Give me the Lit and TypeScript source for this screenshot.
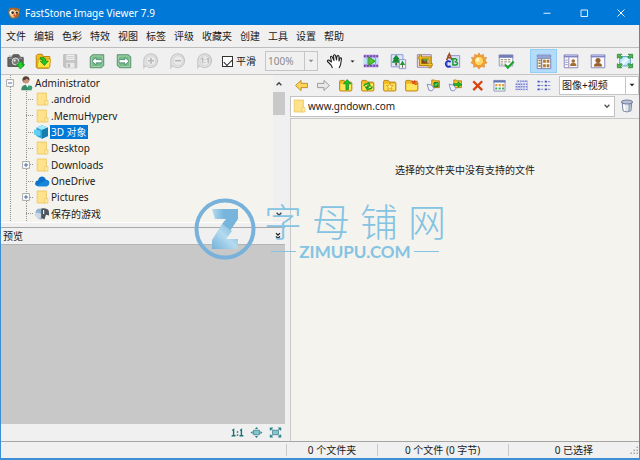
import { LitElement, html, svg, css, nothing, type TemplateResult } from "lit";
import { customElement, property } from "lit/decorators.js";
import { classMap } from "lit/directives/class-map.js";

const folderBase = svg`
  <path d="M3 5.500Q3 4 4.500 4H8.500L10 6H16Q17.500 6 17.500 7.500V15Q17.500 16.500 16 16.500H4.500Q3 16.500 3 15Z" fill="#f3b81e" stroke="#b57a10"/>
  <path d="M4 8H16.500V14Q16.500 15.500 15.500 15.500H5Q4 15.500 4 14.500Z" fill="#ffe45e"/>`;

const linkBase = svg`
  <path d="M8 3.500H11L12 4.500H17V12.500H8Z" fill="#f3c02c" stroke="#b57a10"/>
  <path d="M9 6.500H16V11.500H9Z" fill="#ffe45e"/>
  <path d="M2.500 8.500L8 9.500L10.500 13.500L8 16.500L4.500 15.500Z" fill="#eef1ff" stroke="#7783ba"/>`;

const zoomBase = svg`
  <path d="M10 2A7.700 7.700 0 1 1 4 15L2 17.500V9.500A7.700 7.700 0 0 1 10 2Z" fill="#e2e2e2" stroke="#c6c6c6" stroke-width="1.200"/>
  <circle cx="10" cy="9.600" r="5.400" fill="#ebebeb" stroke="#d2d2d2"/>`;

const frameBase = svg`
  <path d="M2.500 3.500H17.500V17.500H2.500Z" fill="#fbf9fb" stroke="#8181b5"/>
  <path d="M2 3H18V6H2Z" fill="#7e83bd"/><path d="M3 4H17" stroke="#b9c0ef"/>`;

const ICONS: Record<string, TemplateResult> = {
  logo: svg`
    <path d="M2 7L3 2L8 3Q12 1 16 4L19 3L18 9Q19 15 13 18H7Q1 14 2 7Z" fill="#a8672a"/>
    <path d="M3 9Q5 4 10 5L14 11L9 17Q4 15 3 9Z" fill="#f0cb8e"/>
    <circle cx="7" cy="9" r="3" fill="#fff"/><circle cx="8" cy="9.500" r="1.900" fill="#3a2c22"/>
    <circle cx="14" cy="9" r="2.600" fill="#ffe7b0"/><circle cx="14" cy="9.500" r="1.700" fill="#3a2c22"/>
    <path d="M10 10L12 14L9 15Z" fill="#e03c28"/>`,
  camera: svg`
    <path d="M1 6H5L7 3H13L15 6H18V16H1Z" fill="#676767" stroke="#4d4d4d"/>
    <path d="M2 7H17M2 4.500H5" stroke="#a5a5a5"/><circle cx="9.500" cy="10.500" r="5" fill="#d4d4d4" stroke="#414141"/>
    <circle cx="9.500" cy="10.500" r="3" fill="#7a7a7a"/><circle cx="8.500" cy="9.500" r="1.200" fill="#eee"/>
    <path d="M13 11H17V14H19.500L15 19L10.500 14H13Z" fill="#23d12d" stroke="#0b8d19" stroke-width=".8"/>`,
  open: svg`
    <path d="M2.500 17V4L4 2.500H9L10.500 5H17.500V16.500L16 18H3.500Z" fill="#f9bd15" stroke="#b67c0b"/>
    <path d="M5 8H18.500L17 17.500H3.500Z" fill="#ffe63c" stroke="#d39c18"/>
    <path d="M7 6Q13 5 13 10H16L11.500 15L7 10H10Q10 8 7 8Z" fill="#23c52b" stroke="#0e8718" stroke-width=".8"/>`,
  save: svg`
    <path d="M3 3H17.500V17.500H4.500L3 16Z" fill="#c4c4c4" stroke="#bababa"/><path d="M6 3H15V9H6Z" fill="#eee"/>
    <path d="M7 5H14M7 7H14" stroke="#ccc"/><path d="M6 12H15V17.500H6Z" fill="#e9e9e9"/><path d="M7.500 13H10V17H7.500Z" fill="#b8b8b8"/>`,
  prev: svg`
    <path d="M2.500 5.500L5 3H17.500V15L15 17.500H2.500Z" fill="#72b58a" stroke="#5b8e6c"/>
    <path d="M4 6L6 4.500H16V14L14 16H4Z" fill="#75bb82" stroke="#a5d6ae"/>
    <path d="M4.500 10.200L9 6V8.500H15.500V12H9V14.500Z" fill="#fff" stroke="#3e7f75" stroke-width=".8"/>`,
  next: svg`
    <path d="M2.500 3H15L17.500 5.500V17.500H5L2.500 15Z" fill="#72b58a" stroke="#5b8e6c"/>
    <path d="M4 4.500H14L16 6V16H6L4 14Z" fill="#75bb82" stroke="#a5d6ae"/>
    <path d="M15.500 10.200L11 6V8.500H4.500V12H11V14.500Z" fill="#fff" stroke="#3e7f75" stroke-width=".8"/>`,
  zoomIn: svg`${zoomBase}<path d="M10 6.500V13M6.700 9.700H13.300" stroke="#b8b8b8" stroke-width="1.800"/>`,
  zoomOut: svg`${zoomBase}<path d="M6.700 9.700H13.300" stroke="#b8b8b8" stroke-width="1.800"/>`,
  actual: svg`${zoomBase}<path d="M6 8L7.500 7V12.500M12 8L13.500 7V12.500M10 8V9M10 11V12" fill="none" stroke="#b4b4b4" stroke-width="1.300"/>`,
  hand: svg`
    <path d="M6.500 17L5 14L1.500 10.500Q1 9 2.700 9L5.500 11L4.500 6Q5 4.500 6.300 6L8 9.500L7.500 4.500Q8.500 3 9.500 4.500L10.500 9L11 5Q12.500 4 13 5.500V10L14 7Q15.500 6.500 15.500 8L14.500 14L13 17" fill="#fff" stroke="#222" stroke-width="1.100" stroke-linejoin="round"/>`,
  film: svg`
    <path d="M2 3H18V17H2Z" fill="#b18be2"/><path d="M2 4.500H18M2 15.500H18" stroke="#6a48a3" stroke-width="2" stroke-dasharray="2 1.500"/>
    <path d="M2 6.500H18V13.500H2Z" fill="#b9e4f7"/><path d="M6 6.500V13.500M15 6.500V13.500" stroke="#a08bd0"/>
    <path d="M7.500 5.500L14.500 10.200L7.500 15Z" fill="#57c826" stroke="#2c8b15"/>`,
  tree: svg`
    <path d="M2.500 3H15.500V16.500H2.500Z" fill="#dce7ff" stroke="#8790ca"/>
    <path d="M8 3L12 8H10.500L13 12H3L5.500 8H4Z" fill="#1b8b33"/><path d="M7 12H9V15H7Z" fill="#6b5921"/>
    <path d="M11.500 8.500H18.500V18.500H11.500Z" fill="#edf2ff" stroke="#8790ca"/><path d="M15 9.500L18 14.500H12Z" fill="#239a35"/><path d="M15 14V17.500" stroke="#6b5921"/>`,
  crop: svg`
    <path d="M1.500 3H17V17H1.500Z" fill="#e9d9dc" stroke="#8d80ad"/><path d="M4 7H13V14H4Z" fill="#45aa3b"/><path d="M4 11L7 8L10 11L12 9V14H4Z" fill="#8a451e"/>
    <path d="M5 3V14H18.500M2.500 6.500H15.500V18" fill="none" stroke="#a47404" stroke-width="3"/><path d="M5 3.500V14H18M3 6.500H15.500V17.500" fill="none" stroke="#f1c329" stroke-width="1.500"/>`,
  letters: svg`
    <path d="M5 4H18.500V17H5Z" fill="#dcdff8" stroke="#8c91c7"/>
    <path d="M4 9L7 2L10 9M5 6.500H9" fill="none" stroke="#9d4d28" stroke-width="1.700"/>
    <path d="M8.500 11Q4 8.500 3 13Q3.500 18 8.500 15.500" fill="none" stroke="#1731c4" stroke-width="2"/>
    <path d="M11 7.500V14.500H14Q16.500 14 16 12Q15.500 11 13 11Q15.500 10.500 15.500 9Q15 7.500 13.500 7.500Z" fill="none" stroke="#149c2a" stroke-width="1.600"/>`,
  sun: svg`
    <path d="M10 1L12 4L15 2.500V6L18.500 6L17 9.500L19 12L16 13.500L16 17L12.500 16L10 19L7.500 16L4 17V13.500L1 12L3 9.500L1.500 6H5V2.500L8 4Z" fill="#f0a03c" stroke="#d9842a" stroke-width=".6"/>
    <circle cx="10" cy="10" r="5.200" fill="#ffd865" stroke="#e98f22"/><circle cx="8.500" cy="8.500" r="2.200" fill="#fff6c0"/>`,
  settings: svg`
    <path d="M2.500 3.500H17.500V15.500H2.500Z" fill="#fff" stroke="#8790b4"/><path d="M2 3H18V6.500H2Z" fill="#727fb6"/>
    <path d="M4 8.500H16M4 11H16M4 13.500H10" stroke="#a6a18d" stroke-width="1.600" stroke-dasharray="3 1"/>
    <path d="M9 14L12 17.500L18.500 10.500" fill="none" stroke="#1ba32c" stroke-width="2.400"/>`,
  viewThumbs: svg`
    <path d="M2.500 7H7V18.500H2.500ZM7.500 7H17.500V18.500H7.500Z" fill="#fff8e6" stroke="#6d77b2"/><path d="M2.500 3.500H17.500V5.500H2.500Z" fill="#c3cbf3" stroke="#6d77b2"/>
    <path d="M3.800 9.500H6.200M3.800 12.500H6.200M3.800 15.500H6.200" stroke="#9a7440" stroke-width="1.600"/>
    <path d="M9 8.500H12V12H9ZM13 8.500H16V12H13ZM9 13.500H12V17H9ZM13 13.500H16V17H13Z" fill="#a87a3c"/>`,
  viewSplit: svg`${frameBase}
    <path d="M7.500 6V17" stroke="#8181b5"/><path d="M3.800 9H6.200M3.800 11.500H6.200M3.800 14H6.200" stroke="#8088b3"/>
    <circle cx="12.500" cy="10" r="2" fill="#a56f34"/><path d="M9 15.500Q9 12 12.500 12T16 15.500Z" fill="#a56f34"/>`,
  viewSingle: svg`${frameBase}
    <circle cx="10" cy="9.500" r="2.800" fill="#95602b"/><path d="M5.500 16Q5.500 12.300 10 12.300T14.500 16Z" fill="#95602b"/>`,
  fullscreen: svg`
    <path d="M4 5H16V15.500H4Z" fill="#b9e7fa" stroke="#5a9fc5"/><path d="M5 12L11 6H15V8L8 15H5Z" fill="#e4f8ff"/>
    <path d="M1.500 7V2.500H6.500L5 4L7 6L5.500 7.500L3.500 5.500ZM13.500 2.500H18.500V7L16.500 5.500L14.500 7.500L13 6L15 4ZM1.500 13L3.500 14.500L5.500 12.500L7 14L5 16L6.500 17.500H1.500ZM18.500 13V17.500H13.500L15 16L13 14L14.500 12.500L16.500 14.500Z" fill="#50b94d" stroke="#207d2b" stroke-width=".8"/>`,
  back: svg`<path d="M3 10L9.500 4V7.500H17V12.500H9.500V16Z" fill="#ffd65a" stroke="#b98117"/>`,
  forward: svg`<path d="M17 10L10.500 4V7.500H3V12.500H10.500V16Z" fill="#e8e8e8" stroke="#8f8f8f"/>`,
  folderUp: svg`${folderBase}<path d="M10.500 15V8H7.500L12 3L16.500 8H13.500V15Z" fill="#1bc329" stroke="#0b8a19" stroke-width=".8"/>`,
  folderSync: svg`${folderBase}<path d="M5.500 10.500Q7 7.500 10.500 8L11.500 7L13 10.500H9.500M15.500 11Q15 14.500 11 14L10 15L8 12H11.500" fill="none" stroke="#169b22" stroke-width="1.600"/>`,
  folderStar: svg`${folderBase}<path d="M10.300 7L11.500 10H14.500L12 12L13 15L10.300 13.200L7.600 15L8.600 12L6 10H9.200Z" fill="#fff48c" stroke="#d88c13" stroke-width=".8"/>`,
  folderNew: svg`${folderBase}<path d="M10 4L12 6L14 4M11 8L13 7L15 9L17.500 7M14 4V9M10 6L17 5" fill="none" stroke="#df4a18" stroke-width="1.200"/>`,
  copyTo: svg`${linkBase}<path d="M10.500 6.500H15.500V11.500H10.500Z" fill="#1ead31" stroke="#0a761b"/><path d="M12 10L14.500 7.500" stroke="#d7ffd6"/>`,
  moveTo: svg`${linkBase}<path d="M8 7.500H13V5.500L17.500 9L13 12V10H8Z" fill="#1db62b" stroke="#0a761b" stroke-width=".7"/>`,
  remove: svg`<path d="M5 5L15.500 15.500M15.500 5L5 15.500" stroke="#d8430f" stroke-width="2.700"/>`,
  thumbs: svg`
    <path d="M3.500 4H16.500V16.500H3.500Z" fill="#fff" stroke="#7f88b0"/><path d="M3 4H17V6.500H3Z" fill="#6475b5"/>
    <path d="M5 9.500H15.500" stroke="#e39a32" stroke-width="2.500" stroke-dasharray="2.500 1.500"/><path d="M5 13.500H15.500" stroke="#3dad5b" stroke-width="2.500" stroke-dasharray="2.500 1.500"/>`,
  details: svg`
    <path d="M5 5H17M3 8.500H17M3 11.500H17M3 14.500H17" stroke="#757fd0" stroke-width="1.600" stroke-dasharray="2.200 .8"/><path d="M5 4V16M9 4V16M13 4V16M17 4V16" stroke="#b1b8e9"/>`,
  list: svg`
    <path d="M3 5.500H5.500M11.500 5.500H14M3 10H5.500M11.500 10H14M3 14.500H5.500M11.500 14.500H14" stroke="#4251c0" stroke-width="2"/>
    <path d="M6.500 5.500H9.500M15 5.500H18M6.500 10H9.500M15 10H18M6.500 14.500H9.500M15 14.500H18" stroke="#6c76c9" stroke-width="1.200" stroke-dasharray="1.300 .5"/>`,
  trash: svg`
    <path d="M4 5L5 16Q10 19 15 16L16 5Z" fill="#e3e8f1" stroke="#626d8d"/><path d="M12 7L11.500 16.500L14 16L15 7Z" fill="#a2abc2"/>
    <ellipse cx="10" cy="5" rx="7" ry="2.500" fill="#b9c1d6" stroke="#596585"/><path d="M6 8L7 16" stroke="#fff" stroke-width="1.500"/>`,
  folder: svg`<path d="M4 2.500H15.500V17.500H4Z" fill="#ffe28a" stroke="#ebc55e"/><path d="M13.500 12H17.500V17.500H13.500Z" fill="#ffe9a5" stroke="#ebc55e" stroke-width=".8"/>`,
  user: svg`
    <path d="M4 19Q4 13 10 12Q16 13 17 19Z" fill="#3c8868"/><path d="M9 11L12 16L13 12Z" fill="#fff"/><circle cx="10" cy="6.500" r="4" fill="#c9937c"/>
    <path d="M5.500 6Q6 1 10.500 1.500Q14.500 2 14.500 7Q12 6 11 4.500Q9 7 6.500 6.500V10Z" fill="#564034"/>
    <circle cx="15" cy="16" r="3" fill="#35a276"/>`,
  cube: svg`
    <path d="M10 1.500L17.500 4.500V15L10 18.500L3 15V4.500Z" fill="#29a5db"/><path d="M10 1.500L17.500 4.500L10 7.500L3 4.500Z" fill="#a6e9fb"/>
    <path d="M10 7.500L17.500 4.500V15L10 18.500Z" fill="#167eae"/><path d="M0 7L8 8V15L0 13.500Z" fill="#5fd0f2"/>`,
  cloud: svg`
    <path d="M5 16.500Q1 16 1.500 12.500Q2 9.500 5 9.500Q6 4.500 10.500 4.500Q14 5 15 8.500Q19 9 19 12.500Q18.500 16 16 16.500Z" fill="#0c72c8"/>
    <path d="M5 16.500Q3 15 8 12.500L12 11Q14 8 18.500 10Q20.500 15 16 16.500Z" fill="#1586dc"/>`,
  games: svg`
    <path d="M2 8Q2 3 8 3L10 5V17Q3 17 2 8Z" fill="#8fb1d0"/><path d="M9 3Q17 2 18.500 6L19 12L15 11L13 17L9 15Z" fill="#4c5660"/>
    <path d="M0 10L5 8L9 10L8 16L3 14Z" fill="#ccd9e5"/><path d="M12 5V10" stroke="#e9eef2" stroke-width="1.500"/>`,
  oneToOne: svg`<path d="M2 7L4 5.500V15M1 15H7M14 7L16 5.500V15M13 15H19M10 8V10.500M10 12.500V15" fill="none" stroke="#1a7474" stroke-width="2.200"/>`,
  shrink: svg`
    <path d="M5.500 6.500H14.500V13.500H5.500Z" fill="#83c5d0" stroke="#286f7d"/><path d="M10 1.500L12.500 4.500H7.500ZM10 18.500L12.500 15.500H7.500ZM1 10L4 7.500V12.500ZM19 10L16 7.500V12.500Z" fill="#25808a"/>`,
  fit: svg`
    <path d="M5.500 6.500H14.500V13.500H5.500Z" fill="#83c5d0" stroke="#286f7d"/><path d="M2 7V3H6M14 3H18V7M2 13V17H6M14 17H18V13M2 3L5 6M18 3L15 6M2 17L5 14M18 17L15 14" fill="none" stroke="#25808a" stroke-width="1.600"/>`,
  caret: svg`<path d="M2 6H18L10 14Z" fill="currentColor"/>`,
  up: svg`<path d="M4 13L10 7L16 13" fill="none" stroke="currentColor" stroke-width="3.500"/>`,
  down: svg`<path d="M4 7L10 13L16 7" fill="none" stroke="currentColor" stroke-width="3.500"/>`,
  collapse: svg`<path d="M5 3L10 8L15 3M5 11L10 16L15 11" fill="none" stroke="currentColor" stroke-width="3"/>`,
  minimize: svg`<path d="M3 10.500H17" stroke="#fff" stroke-width="1.800"/>`,
  maximize: svg`<path d="M4 4H17V17H4Z" fill="none" stroke="#fff" stroke-width="1.800"/>`,
  close: svg`<path d="M3 3L17 17M17 3L3 17" stroke="#fff" stroke-width="1.900"/>`,
  plus: svg`<path d="M1.500 1.500H18.500V18.500H1.500Z" fill="#fff" stroke="#949494" stroke-width="2"/><path d="M5 10H15M10 5V15" stroke="#34589c" stroke-width="2.200"/>`,
  minus: svg`<path d="M1.500 1.500H18.500V18.500H1.500Z" fill="#fff" stroke="#949494" stroke-width="2"/><path d="M5 10H15" stroke="#34589c" stroke-width="2.200"/>`,
  grip: svg`<path d="M15 3H18V6H15ZM15 9H18V12H15ZM15 15H18V18H15ZM9 9H12V12H9ZM9 15H12V18H9ZM3 15H6V18H3Z" fill="#a8a8a8"/>`,
};

@customElement("fs-icon")
class FsIcon extends LitElement {
  @property() name = "";
  static styles = css`
    :host { display: block; flex: none; width: 20px; height: 20px; }
    svg { display: block; width: 100%; height: 100%; }
  `;
  render() {
    return html`<svg viewBox="0 0 20 20" aria-hidden="true">${ICONS[this.name]}</svg>`;
  }
}

type Action = [icon: string, label: string, disabled?: boolean];

const MENUS = ["文件", "编辑", "色彩", "特效", "视图", "标签", "评级", "收藏夹", "创建", "工具", "设置", "帮助"];
const FILE_ACTIONS: Action[] = [
  ["camera", "截图"], ["open", "打开"], ["save", "保存", true], ["prev", "上一个"], ["next", "下一个"],
  ["zoomIn", "放大", true], ["zoomOut", "缩小", true], ["actual", "实际大小", true],
];
const EDIT_ACTIONS: Action[] = [
  ["film", "幻灯片"], ["tree", "调整大小"], ["crop", "裁剪"], ["letters", "重命名"], ["sun", "亮度"], ["settings", "设置"],
];
const VIEW_ACTIONS: Action[] = [
  ["viewThumbs", "缩略图"], ["viewSplit", "窗口视图"], ["viewSingle", "单图视图"], ["fullscreen", "全屏"],
];
const FOLDER_ACTIONS: Action[] = [
  ["back", "后退"], ["forward", "前进"], ["folderUp", "向上"], ["folderSync", "刷新"], ["folderStar", "收藏"],
  ["folderNew", "新建文件夹"], ["copyTo", "复制到"], ["moveTo", "移动到"], ["remove", "删除"],
  ["thumbs", "缩略图"], ["details", "详细信息"], ["list", "列表"],
];
const NODES: { label: string; icon: string; expandable?: boolean; selected?: boolean }[] = [
  { label: ".android", icon: "folder" },
  { label: ".MemuHyperv", icon: "folder" },
  { label: "3D 对象", icon: "cube", selected: true },
  { label: "Desktop", icon: "folder" },
  { label: "Downloads", icon: "folder", expandable: true },
  { label: "OneDrive", icon: "cloud" },
  { label: "Pictures", icon: "folder", expandable: true },
  { label: "保存的游戏", icon: "games" },
];

@customElement("app-root")
class AppRoot extends LitElement {
  static styles = css`
    :host {
      display: block;
      font: 10px/14px "Noto Sans", "Noto Sans CJK SC", sans-serif;
      color: #1a1a1a;
    }
    * { box-sizing: border-box; }
    button, input, select { font: inherit; color: inherit; margin: 0; padding: 0; border: 0; background: none; border-radius: 0; }
    button { display: flex; align-items: center; justify-content: center; }
    select { appearance: none; flex: 1; min-width: 0; padding: 0 2px; opacity: 1; }
    .window {
      position: relative;
      display: flex;
      flex-direction: column;
      min-height: 100vh;
      background: #f0f0f0;
      border: solid #3c8fd2;
      border-width: 0 1px 2px;
    }
    .title { display: flex; align-items: center; height: 25px; padding: 0 1px 0 7px; gap: 4px; margin: 0 -1px; background: #0078d7; color: #fff; }
    .title h1 { flex: 1; margin: 0; font-size: 10px; font-weight: 400; }
    .title fs-icon { width: 14px; height: 14px; }
    .title .group button { width: 37px; height: 25px; }
    .title button fs-icon { width: 10px; height: 10px; }
    .menu { display: flex; align-items: center; height: 23px; gap: 8px; padding-left: 5px; border-bottom: 1px solid #bdbdbd; font-family: "Noto Sans CJK SC", sans-serif; }
    .bar { display: flex; align-items: center; height: 26px; padding: 0 1px; }
    .group { display: flex; align-items: center; }
    .group button { width: 27px; height: 24px; }
    .bar .group fs-icon { width: 18px; height: 18px; }
    .active { background: #b3dcfb; outline: 1px solid #96cdf5; outline-offset: -1px; }
    .smooth { display: flex; align-items: center; gap: 3px; margin: 0 9px 0 4px; }
    .smooth input { appearance: none; display: grid; place-items: center; width: 11px; height: 11px; border: 1px solid #333; background: #fff; }
    .smooth input:checked::before { content: ""; width: 7px; height: 4px; border: solid #222; border-width: 0 0 1px 1px; transform: rotate(-45deg); }
    .combo { display: flex; align-items: center; border: 1px solid #c5c5c5; background: #fff; }
    .combo fs-icon { width: 6px; height: 6px; margin: 0 3px; }
    .split { align-self: stretch; border-left: 1px solid #c5c5c5; }
    .zoom { width: 53px; height: 20px; background: #f0f0f0; color: #8a8a8a; }
    .hand { width: 24px; margin-left: 3px; }
    .pan { display: flex; align-items: center; margin-right: 1px; margin-left: 3px; }
    .pan .drop { width: 8px; }
    .pan .drop fs-icon { width: 5px; height: 5px; }
    .views { margin-left: auto; }
    .body { flex: 1; display: grid; grid-template-columns: 289fr 349fr; border-top: 1px solid #c6c6c6; }
    .left { display: flex; flex-direction: column; min-width: 0; padding-right: 5px; }
    .browser { display: flex; background: #f4f3ee; border-bottom: 1px solid #fff; }
    .tree { flex: 1; height: 147px; margin: 0; padding: 0 0 0 1px; list-style: none; display: grid; grid-auto-rows: 1fr; }
    .tree li { display: flex; align-items: center; min-height: 0; }
    .gutter {
      align-self: stretch; width: 16px; display: grid; place-items: center;
      background: repeating-linear-gradient(#929292 0 1px, transparent 1px 2px) center / 1px 100% no-repeat;
    }
    .branch {
      background:
        repeating-linear-gradient(#929292 0 1px, transparent 1px 2px) center / 1px 100% no-repeat,
        repeating-linear-gradient(90deg, #929292 0 1px, transparent 1px 2px) right center / 8px 1px no-repeat;
    }
    .gutter fs-icon { width: 8px; height: 8px; }
    .tree li > fs-icon { width: 16px; height: 16px; }
    .label { padding: 0 1px; font-size: 10px; }
    .selected { background: #0078d7; color: #fff; }
    .scroll { display: flex; flex-direction: column; align-items: center; width: 12px; background: #f0f0f0; }
    .scroll button { width: 12px; height: 17px; color: #444; }
    .scroll fs-icon { width: 8px; height: 8px; }
    .thumb { width: 12px; height: 23px; background: #c9c9c9; }
    .track { flex: 1; }
    .head { display: flex; align-items: center; justify-content: space-between; height: 17px; margin-top: 4px; padding: 0 3px 0 2px; border-top: 1px solid #a8a8a8; }
    .head h2 { margin: 0; font-size: 10px; font-weight: 400; }
    .head fs-icon { width: 8px; height: 8px; }
    .preview { flex: 1; background: #c8c8c8; border-top: 1px solid #b4b4b4; }
    .tools { display: flex; align-items: center; justify-content: flex-end; gap: 4px; height: 17px; padding-right: 2px; }
    .tools button { width: 15px; height: 15px; }
    .tools fs-icon { width: 13px; height: 13px; }
    .right { display: flex; flex-direction: column; min-width: 0; }
    .foldbar { display: flex; align-items: center; height: 20px; }
    .foldbar .group button { width: 22px; height: 20px; }
    .foldbar .group fs-icon { width: 17px; height: 17px; }
    .filter { flex: 1; height: 19px; margin-left: 5px; }
    .address { display: flex; align-items: center; height: 22px; }
    .path { flex: 1; display: flex; align-items: center; min-width: 0; height: 21px; border: 1px solid #c2c2c2; background: #fff; }
    .path fs-icon { width: 16px; height: 16px; }
    .path input { flex: 1; min-width: 0; padding: 0 1px; outline: none; }
    .path button { width: 14px; color: #555; }
    .path button fs-icon { width: 8px; height: 8px; }
    .trash { width: 24px; }
    .trash fs-icon { width: 16px; height: 16px; }
    .files { flex: 1; margin-top: 1px; border: solid #c9c9c9; border-width: 1px 0 0 1px; background: #f4f3ee; }
    .files p { margin: 0; padding: 44px 0 0; text-align: center; }
    .status { display: grid; grid-template-columns: 285fr 90fr 131fr 131fr; align-items: center; height: 17px; border-top: 1px solid #a5a5a5; text-align: center; }
    .status span { display: flex; align-items: center; justify-content: center; height: 12px; border-left: 1px solid #c9c9c9; }
    .status span:first-child { border: 0; }
    .status .last { justify-content: space-between; }
    .status .last fs-icon, .status .pad { width: 10px; height: 10px; }
    .mark { position: absolute; inset: 0; display: flex; align-items: center; justify-content: center; gap: 8px; pointer-events: none; color: #84c3e2; }
    .mark .badge { width: 62px; height: 62px; }
    .words { display: flex; flex-direction: column; align-items: center; gap: 1px; }
    .name { display: flex; gap: 10px; font: 300 38px/44px "Noto Sans CJK SC", sans-serif; }
    .site { display: flex; align-items: center; gap: 3px; font: 700 17px/18px Lato, sans-serif; }
    .site::before, .site::after { content: ""; width: 25px; height: 1px; background: currentColor; }
  `;

  private actions(list: Action[], active = "") {
    return list.map(
      ([icon, label, disabled]) => html`<button class=${classMap({ active: icon === active })} aria-label=${label} ?disabled=${disabled ?? false}>
        <fs-icon name=${icon}></fs-icon>
      </button>`,
    );
  }

  render() {
    return html`
      <div class="window">
        <header class="title">
          <fs-icon name="logo"></fs-icon>
          <h1>FastStone Image Viewer 7.9</h1>
          <div class="group">${this.actions([["minimize", "最小化"], ["maximize", "最大化"], ["close", "关闭"]])}</div>
        </header>
        <nav class="menu">${MENUS.map((m) => html`<button>${m}</button>`)}</nav>
        <div class="bar">
          <div class="group">${this.actions(FILE_ACTIONS)}</div>
          <label class="smooth"><input type="checkbox" checked />平滑</label>
          <div class="combo zoom">
            <select aria-label="缩放" disabled><option>100%</option></select>
            <span class="split"></span><fs-icon name="caret"></fs-icon>
          </div>
          <div class="pan">
            <button class="hand" aria-label="平移"><fs-icon name="hand"></fs-icon></button>
            <button class="drop" aria-label="更多"><fs-icon name="caret"></fs-icon></button>
          </div>
          <div class="group">${this.actions(EDIT_ACTIONS)}</div>
          <div class="group views">${this.actions(VIEW_ACTIONS, "viewThumbs")}</div>
        </div>
        <main class="body">
          <section class="left">
            <div class="browser">
              <ul class="tree">
                <li><span class="gutter"><fs-icon name="minus"></fs-icon></span><fs-icon name="user"></fs-icon><span class="label">Administrator</span></li>
                ${NODES.map(
                  (n) => html`<li>
                    <span class="gutter"></span>
                    <span class="gutter branch">${n.expandable ? html`<fs-icon name="plus"></fs-icon>` : nothing}</span>
                    <fs-icon name=${n.icon}></fs-icon>
                    <span class=${classMap({ label: true, selected: !!n.selected })}>${n.label}</span>
                  </li>`,
                )}
              </ul>
              <div class="scroll">
                <button aria-label="向上滚动"><fs-icon name="up"></fs-icon></button>
                <div class="thumb"></div>
                <div class="track"></div>
                <button aria-label="向下滚动"><fs-icon name="down"></fs-icon></button>
              </div>
            </div>
            <div class="head"><h2>预览</h2><button aria-label="折叠"><fs-icon name="collapse"></fs-icon></button></div>
            <div class="preview"></div>
            <div class="tools">${this.actions([["oneToOne", "实际大小"], ["shrink", "适合大小"], ["fit", "适合窗口"]])}</div>
          </section>
          <section class="right">
            <div class="foldbar">
              <div class="group">${this.actions(FOLDER_ACTIONS)}</div>
              <div class="combo filter">
                <select aria-label="文件类型"><option>图像+视频</option></select>
                <span class="split"></span><fs-icon name="caret"></fs-icon>
              </div>
            </div>
            <div class="address">
              <div class="path">
                <fs-icon name="folder"></fs-icon>
                <input aria-label="路径" value="www.gndown.com" />
                <button aria-label="历史路径"><fs-icon name="down"></fs-icon></button>
              </div>
              <button class="trash" aria-label="回收站"><fs-icon name="trash"></fs-icon></button>
            </div>
            <div class="files"><p>选择的文件夹中没有支持的文件</p></div>
          </section>
        </main>
        <footer class="status">
          <span></span><span>0 个文件夹</span><span>0 个文件 (0 字节)</span>
          <span class="last"><i class="pad"></i>0 已选择<fs-icon name="grip"></fs-icon></span>
        </footer>
        <div class="mark">
          <svg class="badge" viewBox="0 0 62 62" aria-hidden="true">
            <defs>
              <linearGradient id="zt" x1="0" x2="1"><stop offset="0" stop-color="#b5dcef" /><stop offset=".45" stop-color="#78b5dc" /></linearGradient>
              <linearGradient id="zb" x1="0" x2="1" y1="1" y2="0"><stop offset="0" stop-color="#74b2da" /><stop offset=".5" stop-color="#b4daee" /><stop offset="1" stop-color="#74b2da" /></linearGradient>
            </defs>
            <circle cx="31" cy="31" r="28.500" fill="none" stroke="#78b2da" stroke-width="4" />
            <path d="M18 11H44V21L36 33L28 26L32 21H21Z" fill="url(#zt)" />
            <path d="M28 26L38 33L32 41H44V51H18V42Z" fill="url(#zb)" />
          </svg>
          <div class="words">
            <div class="name"><span>字</span><span>母</span><span>铺</span><span>网</span></div>
            <div class="site">ZIMUPU.COM</div>
          </div>
        </div>
      </div>
    `;
  }
}
